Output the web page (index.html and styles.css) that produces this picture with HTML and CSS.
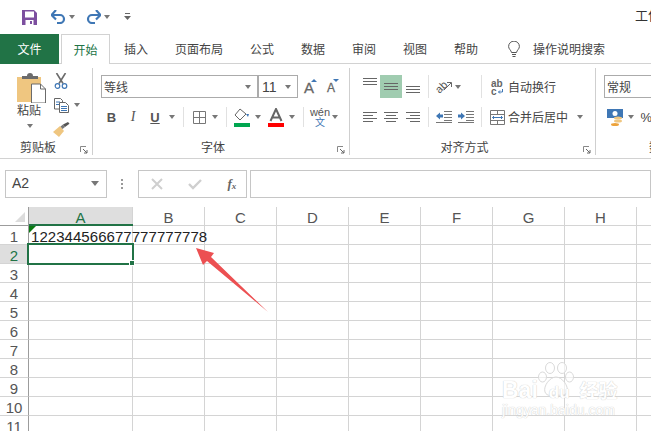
FILE: index.html
```html
<!DOCTYPE html>
<html lang="zh">
<head>
<meta charset="utf-8">
<title>Excel</title>
<link rel="stylesheet" href="styles.css">
</head>
<body>
<div class="app">
  <div class="qat">
    <span class="tool w20 ml19"><svg width="15" height="15" viewBox="0 0 15 15"><path d="M0 0h12l3 3v12H0z" fill="#7c4f9f"/><rect x="3" y="1.500" width="9" height="6" fill="#fff"/><rect x="3.500" y="10" width="8" height="5" fill="#fff"/><rect x="8" y="11" width="2" height="3" fill="#7c4f9f"/></svg></span>
    <span class="tool w20 ml9"><svg width="15" height="14" viewBox="0 0 15 14"><path d="M1 5h8a4 4 0 0 1 0 8H6" fill="none" stroke="#3f77b5" stroke-width="2.200"/><path d="M5 0 .5 5 5 9.500" fill="none" stroke="#3f77b5" stroke-width="2.200"/></svg></span>
    <span class="tool w8"><i class="caret"></i></span>
    <span class="tool w22 ml6"><svg width="15" height="14" viewBox="0 0 15 14"><path d="M14 5H6a4 4 0 0 0 0 8h3" fill="none" stroke="#3f77b5" stroke-width="2.200"/><path d="M10 0l4.500 5L10 9.500" fill="none" stroke="#3f77b5" stroke-width="2.200"/></svg></span>
    <span class="tool w6"><i class="caret"></i></span>
    <span class="tool w12 ml11"><svg width="7" height="8" viewBox="0 0 7 8"><path d="M1 .5h5" stroke="#666"/><path d="M0 3h7L3.500 7z" fill="#666"/></svg></span>
    <span class="title">工作簿1</span>
  </div>

  <div class="tabs">
    <span class="file">文件</span>
    <span class="tab active">开始</span>
    <span class="tab first">插入</span>
    <span class="tab">页面布局</span>
    <span class="tab">公式</span>
    <span class="tab">数据</span>
    <span class="tab">审阅</span>
    <span class="tab">视图</span>
    <span class="tab">帮助</span>
    <span class="bulb"><svg width="12" height="17" viewBox="0 0 12 17"><path d="M3.500 11.500C3 9 .6 8 .6 5.500a5.400 5.400 0 0 1 10.800 0C11.400 8 9 9 8.500 11.500z" fill="none" stroke="#555"/><path d="M4 13.500h4M4.500 15.500h3" stroke="#555"/></svg></span>
    <span class="tab search">操作说明搜索</span>
  </div>

  <div class="ribbon">
    <section class="group g-clip">
      <div class="clip-body">
        <div class="paste">
          <svg width="29" height="30" viewBox="0 0 29 30"><path d="M0 4h24v25H0z" fill="#efc680"/><path d="M5 5V3h5a3 3 0 0 1 6 0h5v3H5z" fill="#6b6b6b"/><path d="M14.500 11h9l5 5v14h-14z" fill="#fff" stroke="#6b6b6b"/><path d="M23.500 11v5h5" fill="none" stroke="#6b6b6b"/></svg>
          <span class="paste-text">粘贴</span>
          <i class="caret"></i>
        </div>
        <div class="clip-tools">
          <div class="ctool"><span class="tool w18"><svg width="14" height="16" viewBox="0 0 14 16"><path d="M2.500 0 9 10.500M11.500 0 5 10.500" stroke="#6b6b6b" stroke-width="1.600"/><circle cx="3.500" cy="13" r="2.300" fill="none" stroke="#3f77b5" stroke-width="1.200"/><circle cx="10.500" cy="13" r="2.300" fill="none" stroke="#3f77b5" stroke-width="1.200"/></svg></span></div>
          <div class="ctool"><span class="tool w18"><svg width="15" height="15" viewBox="0 0 15 15"><path d="M.5.500h6l2 2V11H.5z" fill="#fff" stroke="#666"/><path d="M5.500 4.500h6l3 3v7h-9z" fill="#fff" stroke="#666"/><path d="M2 4h4M2 6.500h3M7 8.500h6M7 10.500h6M7 12.500h6" stroke="#3f77b5"/></svg></span><span class="tool w14"><i class="caret"></i></span></div>
          <div class="ctool"><span class="tool w18"><svg width="17" height="15" viewBox="0 0 17 15"><path d="M0 10 7 4l4 5-5 6z" fill="#efc680"/><path d="M7.500 4.500 10 2.500l2 2.500-2.500 2z" fill="#777"/><path d="M10 2.500 15 0l1.500 1.800L12 5z" fill="#555"/></svg></span></div>
        </div>
      </div>
      <div class="glabel">剪贴板<svg class="launch" width="8" height="8" viewBox="0 0 8 8"><path d="M.5 6V.5H6" fill="none" stroke="#888"/><path d="M3 3l4 4M7 4v3H4" fill="none" stroke="#666"/></svg></div>
    </section>

    <section class="group g-font">
      <div class="row1">
        <span class="combo c-font"><span>等线</span><i class="caret"></i></span>
        <span class="combo c-size"><span>11</span><i class="caret"></i></span>
        <span class="tool w26 big-a">A<i class="up"></i></span>
        <span class="tool w21 small-a">A<i class="down"></i></span>
      </div>
      <div class="row2">
        <span class="tool w21 fmt b">B</span>
        <span class="tool w22 fmt it">I</span>
        <span class="tool w22 fmt u">U</span>
        <span class="tool w12"><i class="caret"></i></span>
        <span class="sep w11"></span>
        <span class="tool w20"><svg width="13" height="13" viewBox="0 0 13 13"><path d="M.5.500h12v12H.5zM6.500.5v12M.5 6.500h12" fill="none" stroke="#777"/></svg></span>
        <span class="tool w12"><i class="caret"></i></span>
        <span class="sep w10"></span>
        <span class="tool w22"><svg width="16" height="19" viewBox="0 0 16 19"><path d="M6 1 1 7l5 5 6-6z" fill="#fff" stroke="#666"/><path d="M12 6h3l-1 3z" fill="#3f77b5"/><rect y="15" width="16" height="4" fill="#00a650"/></svg></span>
        <span class="tool w10"><i class="caret"></i></span>
        <span class="tool w26"><svg width="16" height="19" viewBox="0 0 16 19"><path d="M2.500 13 8 1l5.500 12M4.500 9.500h7" fill="none" stroke="#666" stroke-width="2"/><rect y="15" width="16" height="4" fill="#f00"/></svg></span>
        <span class="tool w6"><i class="caret"></i></span>
        <span class="sep w16"></span>
        <span class="tool w18 wen"><small>wén</small><b>文</b></span>
        <span class="tool w12"><i class="caret"></i></span>
      </div>
      <div class="glabel">字体<svg class="launch" width="8" height="8" viewBox="0 0 8 8"><path d="M.5 6V.5H6" fill="none" stroke="#888"/><path d="M3 3l4 4M7 4v3H4" fill="none" stroke="#666"/></svg></div>
    </section>

    <section class="group g-align">
      <div class="row1">
        <span class="tool w21 al-top"><svg width="14" height="8" viewBox="0 0 14 8"><path d="M0 .5h14M0 3.500h14M0 6.500h14" stroke="#666"/></svg></span>
        <span class="tool w22 on"><svg width="14" height="8" viewBox="0 0 14 8"><path d="M0 .5h14M0 3.500h14M0 6.500h14" stroke="#666"/></svg></span>
        <span class="tool w22 al-bot"><svg width="14" height="8" viewBox="0 0 14 8"><path d="M0 .5h14M0 3.500h14M0 6.500h14" stroke="#666"/></svg></span>
        <span class="sep w8"></span>
        <span class="tool w24"><svg width="16" height="16" viewBox="0 0 16 16"><text x="-1" y="12" class="ab" transform="rotate(-45 5 8)">ab</text><path d="M8 11l7-7M11 3.500h4.500V8" fill="none" stroke="#666"/></svg></span>
        <span class="tool w4"><i class="caret"></i></span>
        <span class="sep w10 ml16"></span>
        <span class="tool w22"><svg width="14" height="16" viewBox="0 0 14 16"><text x="1" y="7.500" class="abc">ab</text><text x="1" y="15.500" class="abc">c</text><path d="M12.500 10v3H8.500M10 11.500 8.500 13l1.500 1.500" fill="none" stroke="#3f77b5"/></svg></span>
        <span class="lbl">自动换行</span>
      </div>
      <div class="row2">
        <span class="tool w21"><svg width="14" height="10" viewBox="0 0 14 10"><path d="M0 .5h14M0 3.500h10M0 6.500h14M0 9.500h10" stroke="#666"/></svg></span>
        <span class="tool w22"><svg width="14" height="10" viewBox="0 0 14 10"><path d="M0 .5h14M2 3.500h10M0 6.500h14M2 9.500h10" stroke="#666"/></svg></span>
        <span class="tool w22"><svg width="14" height="10" viewBox="0 0 14 10"><path d="M0 .5h14M4 3.500h10M0 6.500h14M4 9.500h10" stroke="#666"/></svg></span>
        <span class="sep w8"></span>
        <span class="tool w24"><svg width="16" height="12" viewBox="0 0 16 12"><path d="M8 .5h8M8 3.500h8M8 6.500h8M8 9.500h8M0 11.500h16" stroke="#777" fill="none"/><path d="M0 5l4-3.500V3.500h3v3H4v2z" fill="#3f77b5"/></svg></span>
        <span class="tool w20"><svg width="16" height="12" viewBox="0 0 16 12"><path d="M8 .5h8M8 3.500h8M8 6.500h8M8 9.500h8M0 11.500h16" stroke="#777" fill="none"/><path d="M7 5 3 1.500V3.500H0v3h3v2z" fill="#3f77b5"/></svg></span>
        <span class="sep w10"></span>
        <span class="tool w22"><svg width="15" height="15" viewBox="0 0 15 15"><path d="M.5.500h14v14H.5zM.5 4.500h14M.5 10.500h14M7.500.5v4M7.500 10.500v4" fill="#fff" stroke="#777"/><path d="M2.500 7.500h10M4 6 2.500 7.500 4 9M11 6l1.500 1.500L11 9" fill="none" stroke="#3f77b5"/></svg></span>
        <span class="lbl">合并后居中</span>
        <span class="tool w24"><i class="caret"></i></span>
      </div>
      <div class="glabel">对齐方式<svg class="launch" width="8" height="8" viewBox="0 0 8 8"><path d="M.5 6V.5H6" fill="none" stroke="#888"/><path d="M3 3l4 4M7 4v3H4" fill="none" stroke="#666"/></svg></div>
    </section>

    <section class="group g-num">
      <div class="row1"><span class="combo c-num"><span>常规</span></span></div>
      <div class="row2">
        <span class="tool w22"><svg width="17" height="17" viewBox="0 0 17 17"><rect width="16" height="9" fill="#3f77b5"/><circle cx="8" cy="4.500" r="2.500" fill="#fff"/><ellipse cx="11" cy="9" rx="4" ry="1.500" fill="#efc680"/><ellipse cx="11" cy="12" rx="4" ry="1.500" fill="#efc680"/><ellipse cx="8" cy="15.500" rx="4" ry="1.500" fill="#eda33c"/></svg></span>
        <span class="tool w10"><i class="caret"></i></span>
        <span class="tool w16 pct">%</span>
      </div>
      <div class="glabel num-label">数字</div>
    </section>
  </div>

  <div class="fbar">
    <div class="namebox"><span>A2</span><i class="caret dark"></i></div>
    <div class="grip"><i></i><i></i><i></i></div>
    <div class="fbtns">
      <svg width="12" height="12" viewBox="0 0 12 12"><path d="M1 1l10 10M11 1 1 11" stroke="#cfcfcf" stroke-width="2"/></svg>
      <svg width="14" height="11" viewBox="0 0 14 11"><path d="M1 5l4 4 8-8" fill="none" stroke="#cfcfcf" stroke-width="2.400"/></svg>
      <span class="fx">f<sub>x</sub></span>
    </div>
    <div class="finput"></div>
  </div>

  <div class="sheet">
    <div class="r hdr">
      <span class="c rh corner"><i></i></span><span class="c ca sel">A</span><span class="c">B</span><span class="c">C</span><span class="c">D</span><span class="c">E</span><span class="c">F</span><span class="c">G</span><span class="c">H</span><span class="c">I</span>
    </div>
    <div class="r"><span class="c rh">1</span><span class="c ca data">122344566677777777778</span><span class="c"></span><span class="c"></span><span class="c"></span><span class="c"></span><span class="c"></span><span class="c"></span><span class="c"></span><span class="c"></span></div>
    <div class="r"><span class="c rh sel">2</span><span class="c ca"></span><span class="c"></span><span class="c"></span><span class="c"></span><span class="c"></span><span class="c"></span><span class="c"></span><span class="c"></span><span class="c"></span></div>
    <div class="r"><span class="c rh">3</span><span class="c ca"></span><span class="c"></span><span class="c"></span><span class="c"></span><span class="c"></span><span class="c"></span><span class="c"></span><span class="c"></span><span class="c"></span></div>
    <div class="r"><span class="c rh">4</span><span class="c ca"></span><span class="c"></span><span class="c"></span><span class="c"></span><span class="c"></span><span class="c"></span><span class="c"></span><span class="c"></span><span class="c"></span></div>
    <div class="r"><span class="c rh">5</span><span class="c ca"></span><span class="c"></span><span class="c"></span><span class="c"></span><span class="c"></span><span class="c"></span><span class="c"></span><span class="c"></span><span class="c"></span></div>
    <div class="r"><span class="c rh">6</span><span class="c ca"></span><span class="c"></span><span class="c"></span><span class="c"></span><span class="c"></span><span class="c"></span><span class="c"></span><span class="c"></span><span class="c"></span></div>
    <div class="r"><span class="c rh">7</span><span class="c ca"></span><span class="c"></span><span class="c"></span><span class="c"></span><span class="c"></span><span class="c"></span><span class="c"></span><span class="c"></span><span class="c"></span></div>
    <div class="r"><span class="c rh">8</span><span class="c ca"></span><span class="c"></span><span class="c"></span><span class="c"></span><span class="c"></span><span class="c"></span><span class="c"></span><span class="c"></span><span class="c"></span></div>
    <div class="r"><span class="c rh">9</span><span class="c ca"></span><span class="c"></span><span class="c"></span><span class="c"></span><span class="c"></span><span class="c"></span><span class="c"></span><span class="c"></span><span class="c"></span></div>
    <div class="r"><span class="c rh">10</span><span class="c ca"></span><span class="c"></span><span class="c"></span><span class="c"></span><span class="c"></span><span class="c"></span><span class="c"></span><span class="c"></span><span class="c"></span></div>
    <div class="r"><span class="c rh">11</span><span class="c ca"></span><span class="c"></span><span class="c"></span><span class="c"></span><span class="c"></span><span class="c"></span><span class="c"></span><span class="c"></span><span class="c"></span></div>

    <i class="hline"></i>
    <i class="tri"></i>
    <i class="cursor"><b></b></i>
    <svg class="arrow" width="80" height="70" viewBox="0 0 80 70"><path d="M1 2 19 7 16 11 73 66 12 15 8 19z" fill="#ec5052"/></svg>
    <div class="wm">
      <svg class="paw" width="36" height="36" viewBox="0 0 36 36"><g fill="#fff" fill-opacity=".6" stroke="#dadada"><ellipse cx="12" cy="6" rx="4.500" ry="5.500"/><ellipse cx="24" cy="6" rx="4.500" ry="5.500"/><ellipse cx="4.500" cy="15" rx="4" ry="5"/><ellipse cx="31.500" cy="15" rx="4" ry="5"/><path d="M18 15c6 0 13 9 11 15-2 5-7 3-11 3s-9 2-11-3c-2-6 5-15 11-15z"/></g></svg>
      <div class="wm-logo"><span>Bai</span><span class="du">du</span><span class="jy">经验</span></div>
      <div class="wm-url">jingyan.baidu.com</div>
    </div>
  </div>
</div>
</body>
</html>
```
FILE: styles.css
```css
* { box-sizing: border-box; }
html, body { margin: 0; padding: 0; }
body { width: 651px; height: 431px; overflow: hidden; background: #fff; color: #444; font-family: "Noto Sans CJK SC", "Liberation Sans", sans-serif; font-size: 12px; }
.app { width: 651px; height: 431px; overflow: hidden; }
i, em { font-style: normal; }

.tool { display: flex; align-items: center; justify-content: center; flex: none; height: 100%; }
.w4 { width: 4px; } .w6 { width: 6px; } .w8 { width: 8px; } .w10 { width: 10px; } .w11 { width: 11px; } .w12 { width: 12px; } .w14 { width: 14px; } .w16 { width: 16px; } .w18 { width: 18px; } .w20 { width: 20px; } .w21 { width: 21px; } .w22 { width: 22px; } .w24 { width: 24px; } .w26 { width: 26px; }
.ml6 { margin-left: 6px; } .ml9 { margin-left: 9px; } .ml11 { margin-left: 11px; } .ml16 { margin-left: 16px; } .ml19 { margin-left: 19px; }

.caret { display: block; width: 0; height: 0; border-left: 3.500px solid transparent; border-right: 3.500px solid transparent; border-top: 4px solid #777; flex: none; }
.caret.dark { border-left-width: 4.500px; border-right-width: 4.500px; border-top-width: 5px; }

.qat { display: flex; height: 34px; align-items: stretch; overflow: hidden; }
.title { margin-left: 502px; font-size: 13px; line-height: 29px; white-space: nowrap; color: #333; }

.tabs { display: flex; height: 30px; border-bottom: 1px solid #d2d2d2; align-items: stretch; gap: 27px; white-space: nowrap; }
.file { width: 59px; margin-bottom: -1px; background: #217346; color: #fff; text-align: center; line-height: 29px; font-size: 12px; }
.tab { line-height: 29px; color: #444; }
.tab.active { width: 49px; margin-left: -25px; text-align: center; color: #217346; background: #fff; border: 1px solid #d2d2d2; border-bottom: 0; height: 30px; }
.tab.first { margin-left: -13px; }
.bulb { margin-left: 3px; display: flex; align-items: center; height: 30px; width: 12px; }
.tab.search { margin-left: -14px; }

.ribbon { display: flex; height: 95px; border-bottom: 1px solid #d2d2d2; }
.group { position: relative; flex: none; display: flex; flex-direction: column; padding-top: 7px; border-right: 1px solid #cfcfcf; margin: 4px 0 3px; }
.g-clip { width: 93px; padding-top: 0; }
.g-font { width: 257px; padding-left: 8px; }
.g-align { width: 246px; padding-left: 9px; }
.g-num { width: 120px; padding-left: 8px; border-right: 0; }
.row1 { display: flex; height: 23px; align-items: stretch; }
.row2 { display: flex; height: 20px; margin-top: 9px; align-items: stretch; }
.glabel { position: absolute; left: 0; right: 16px; bottom: -1px; text-align: center; line-height: 18px; font-size: 12px; color: #444; }
.launch { position: absolute; right: -12px; bottom: 2px; }
.num-label { left: 53px; right: auto; }

.clip-body { display: flex; padding-left: 14px; }
.paste { width: 32px; padding-top: 5px; display: flex; flex-direction: column; align-items: center; }
.paste svg { margin-left: 3px; display: block; }
.paste-text { line-height: 18px; margin-top: -2px; margin-left: -2px; }
.paste .caret { margin-top: 5px; }
.clip-tools { margin-left: 6px; padding-top: 1px; }
.ctool { display: flex; height: 24px; align-items: center; }
.ctool .tool { height: 24px; }

.combo { display: flex; align-items: center; height: 23px; border: 1px solid #ababab; padding: 0 6px 0 2px; justify-content: space-between; flex: none; background: #fff; }
.c-font { width: 157px; }
.c-size { width: 40px; padding-left: 3px; font-family: "Liberation Sans", sans-serif; font-size: 14px; }
.c-num { width: 90px; }
.big-a, .small-a { position: relative; font-family: "Liberation Sans", sans-serif; color: #666; justify-content: flex-start; -webkit-text-stroke: .3px #666; }
.big-a { font-size: 15px; padding: 1px 0 0 6px; }
.small-a { font-size: 12px; padding: 3px 0 0 3px; }
.up, .down { position: absolute; top: 4px; width: 0; height: 0; border-left: 3px solid transparent; border-right: 3px solid transparent; }
.up { border-bottom: 3px solid #3f77b5; right: 7px; }
.down { border-top: 3px solid #3f77b5; right: 6px; }
.fmt { font-family: "Liberation Sans", sans-serif; font-size: 13px; color: #555; }
.b { font-weight: 700; }
.it { font-style: italic; font-family: "Liberation Serif", serif; font-size: 14px; }
.u { text-decoration: underline; font-weight: 700; }
.sep { display: flex; justify-content: center; flex: none; }
.sep::before { content: ""; width: 1px; height: 100%; background: #e1e1e1; }
.wen { flex-direction: column; line-height: 9px; font-family: "Liberation Sans", sans-serif; color: #555; }
.wen small { font-size: 11px; line-height: 10px; }
.wen b { font-family: "Noto Sans CJK SC", sans-serif; font-size: 10px; font-weight: 400; color: #3f77b5; line-height: 10px; }
.on { background: #a0ccb0; }
.al-top { align-items: flex-start; padding-top: 3px; }
.al-bot { align-items: flex-end; padding-bottom: 4px; }
.ab { font: 11px "Liberation Sans", sans-serif; fill: #555; }
.abc { font: 700 10px "Liberation Sans", sans-serif; fill: #666; }
.lbl { line-height: 23px; white-space: nowrap; color: #444; }
.row2 .lbl { line-height: 20px; }
.pct { font-family: "Liberation Sans", sans-serif; font-size: 13px; justify-content: flex-end; }

.fbar { display: flex; height: 48px; padding-top: 11px; align-items: flex-start; }
.namebox { width: 102px; height: 28px; margin-left: 5px; border: 1px solid #c6c6c6; display: flex; align-items: center; justify-content: space-between; padding: 0 7px 2px 6px; font: 14px "Liberation Sans", sans-serif; color: #444; }
.grip { width: 31px; height: 28px; display: flex; flex-direction: column; align-items: center; justify-content: center; gap: 2px; }
.grip i { width: 2px; height: 2px; background: #999; }
.fbtns { width: 110px; height: 28px; border: 1px solid #c6c6c6; display: flex; align-items: center; justify-content: space-between; padding: 0 10px 0 12px; }
.fx { font: italic 700 13px "Liberation Serif", serif; color: #666; }
.fx sub { font-size: 9px; vertical-align: -1px; }
.finput { margin-left: 3px; width: 402px; height: 28px; border: 1px solid #c6c6c6; }

.sheet { position: relative; height: 224px; overflow: hidden; font-family: "Liberation Sans", sans-serif; font-size: 15px; }
.r { display: flex; height: 19px; }
.c { flex: none; width: 72px; height: 100%; border-right: 1px solid #d4d4d4; border-bottom: 1px solid #d4d4d4; text-align: center; line-height: 21px; color: #555; white-space: nowrap; }
.rh { width: 29px; border-right: 1px solid #9c9c9c; color: #555; }
.ca { width: 104px; }
.sel { background: #dedede; color: #217346; }
.corner { border-bottom-color: #9c9c9c; display: block; }
.corner i { display: block; width: 0; height: 0; margin: 5px 0 0 15px; border-left: 10px solid transparent; border-bottom: 10px solid #dcdcdc; }
.data { text-align: left; padding-left: 2px; color: #222; overflow: visible; position: relative; z-index: 1; letter-spacing: .05px; }
.hline { position: absolute; left: 29px; top: 17px; width: 104px; height: 2px; background: #217346; }
.tri { position: absolute; left: 29px; top: 19px; width: 0; height: 0; border-top: 7px solid #0b7a12; border-right: 7px solid transparent; z-index: 2; }
.cursor { position: absolute; left: 27px; top: 36px; width: 107px; height: 22px; border: 2px solid #217346; z-index: 2; }
.cursor b { position: absolute; right: -3px; bottom: -3px; width: 6px; height: 6px; background: #217346; border: 1px solid #fff; box-sizing: border-box; }
.arrow { position: absolute; left: 195px; top: 39px; z-index: 3; }

.wm { position: absolute; left: 497px; top: 153px; width: 120px; height: 71px; z-index: 3; color: #fff; text-shadow: 0 0 1px #d0d0d0, 0 0 1px #d0d0d0; }
.paw { position: absolute; left: 41px; top: 2px; }
.wm-logo { position: absolute; left: 5px; top: 18px; width: 120px; display: flex; align-items: baseline; font: 700 23px/24px "Liberation Sans", sans-serif; white-space: nowrap; }
.wm-logo .du { margin-left: 11px; font-size: 17px; }
.wm-logo .jy { margin-left: 10px; font: 700 19px/24px "Noto Sans CJK SC", sans-serif; }
.wm-url { position: absolute; left: 5px; top: 41px; font: 400 14px/18px "Liberation Sans", sans-serif; white-space: nowrap; }
```
